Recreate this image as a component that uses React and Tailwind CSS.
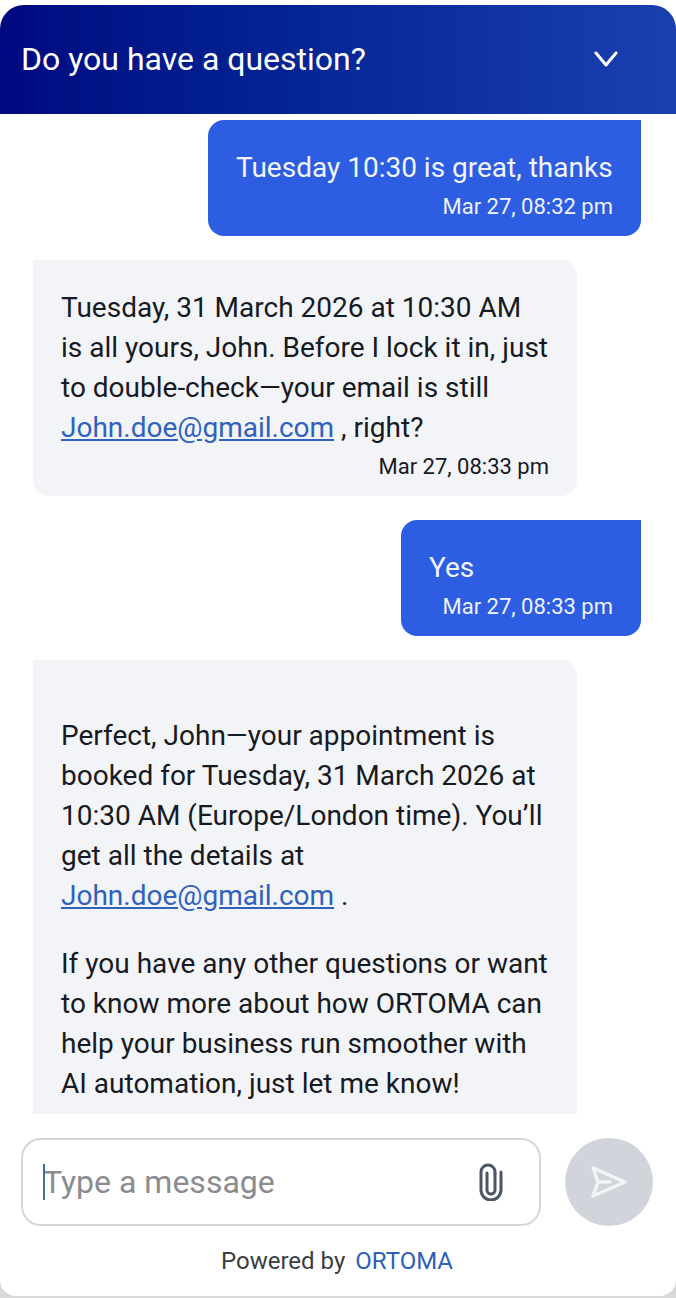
import React from "react";

function UserBubble({ children, time, w }) {
  return (
    <div className="flex justify-end pr-[35px]">
      <div className={`${w} bg-[#2d5de0] text-white rounded-[16px] rounded-tr-none pt-[28px] pb-[15px] px-[28px] flex flex-col`}>
        <div className="text-[28px] leading-[40px] text-[#f1f5fd]">{children}</div>
        <div className="mt-[5px] text-[22px] leading-[28px] text-right text-[#eef2fc]">{time}</div>
      </div>
    </div>
  );
}

const Mail = () => (
  <a className="text-[#2f62bd] underline">John.doe@gmail.com</a>
);

export default function App() {
  return (
    <div className="w-[676px] h-[1298px] bg-[#d9d9d9] overflow-hidden" style={{ fontFamily: "Roboto, sans-serif" }}>
      <div className="h-[1296px] bg-white rounded-b-[16px] pt-[5px] flex flex-col overflow-hidden">
        <header className="h-[109px] shrink-0 rounded-t-[24px] bg-gradient-to-r from-[#00087f] to-[#1a40b0] flex items-center justify-between pl-[21px] pr-[56px] pb-[1px]">
          <h1 className="text-[32px] leading-[40px] font-normal text-white">Do you have a question?</h1>
          <svg width="26" height="16" viewBox="0 0 26 16" fill="none" stroke="white" strokeWidth="3" strokeLinecap="round" strokeLinejoin="round">
            <path d="M2 2 L12 14 L22 2" />
          </svg>
        </header>

        <main className="flex-1 min-h-0 overflow-hidden pt-[6px] flex flex-col gap-[24px]">
          <UserBubble w="w-[433px]" time="Mar 27, 08:32 pm">Tuesday 10:30 is great, thanks</UserBubble>

          <div className="pl-[33px] shrink-0">
            <div className="w-[544px] bg-[#f3f4f8] rounded-[16px] rounded-tl-none pt-[28px] pb-[15px] px-[28px] text-[#161a23]">
              <div className="text-[28px] leading-[40px]">
                Tuesday, 31 March 2026 at 10:30 AM is all yours, John. Before I lock it in, just to double-check—your email is still <Mail /> , right?
              </div>
              <div className="mt-[5px] text-[22px] leading-[28px] text-right">Mar 27, 08:33 pm</div>
            </div>
          </div>

          <UserBubble w="w-[240px]" time="Mar 27, 08:33 pm">Yes</UserBubble>

          <div className="pl-[33px] flex-1 min-h-0">
            <div className="w-[544px] h-full bg-[#f3f4f8] rounded-tr-[16px] pt-[56px] px-[28px] text-[28px] leading-[40px] text-[#161a23]">
              <p className="mb-[28px]">
                Perfect, John—your appointment is booked for Tuesday, 31 March 2026 at 10:30 AM (Europe/London time). You’ll get all the details at <Mail /> .
              </p>
              <p>
                If you have any other questions or want to know more about how ORTOMA can help your business run smoother with AI automation, just let me know!
              </p>
            </div>
          </div>
        </main>

        <div className="shrink-0 h-[182px] pt-[24px] pl-[21px] pr-[23px]">
          <div className="flex items-center justify-between">
            <div className="relative w-[520px] h-[88px] border-2 border-[#d5d6d8] rounded-[20px] flex items-center justify-between pl-[20px] pr-[36px]">
              <div className="relative text-[32px] leading-[44px] text-[#8a8c90]">
                <span className="absolute left-0 top-[-1px] w-[2px] h-[36px] mt-[5px] bg-[#3f6ea8]" />
                Type a message
              </div>
              <svg width="24" height="38" viewBox="0 0 24 38" fill="none" stroke="#4b5563" strokeWidth="3" strokeLinecap="round">
                <path d="M16 10 V27 a4 4 0 0 1 -8 0 V10" />
                <path d="M16 10 V9 a7 7 0 0 0 -14 0 V27 a10 10 0 0 0 20 0 V9" />
              </svg>
            </div>
            <button className="w-[88px] h-[88px] rounded-full bg-[#d1d5db] flex items-center justify-center">
              <svg width="38" height="34" viewBox="0 0 38 34" fill="none" stroke="#f3f4f6" strokeWidth="3.5" strokeLinejoin="round" strokeLinecap="round">
                <path d="M3 3 L35 17 L3 31 L8 17 Z" />
                <path d="M8 17 H20" />
              </svg>
            </button>
          </div>
          <div className="mt-[17px] flex justify-center gap-[10px] text-[24px] leading-[36px] text-[#3a3d42]">
            <span>Powered by</span>
            <span className="text-[#2f5fb8]">ORTOMA</span>
          </div>
        </div>
      </div>
    </div>
  );
}
